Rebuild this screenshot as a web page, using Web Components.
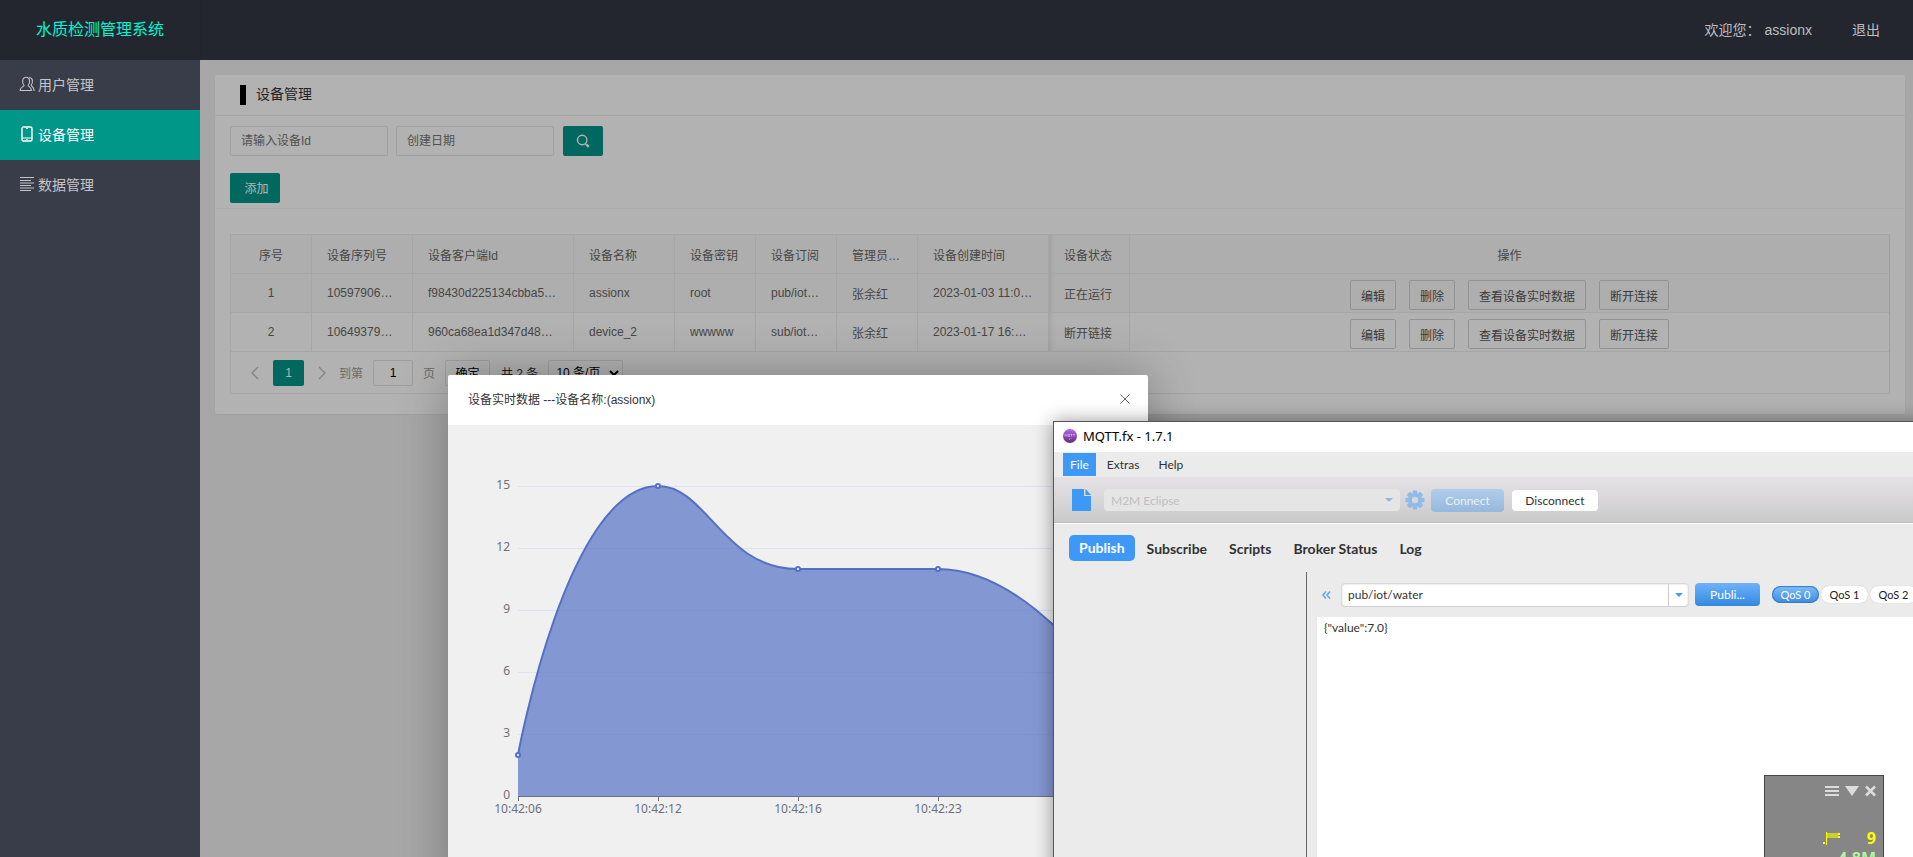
<!DOCTYPE html>
<html lang="zh-CN">
<head>
<meta charset="utf-8">
<title>水质检测管理系统</title>
<style>
  html, body { margin: 0; height: 100%; overflow: hidden; }
  body { font-family: "Liberation Sans", "Noto Sans CJK SC", sans-serif; font-size: 14px; color: #333; background: #f0f0f0; }
</style>
</head>
<body>
<admin-app></admin-app>
<script>
function define(name, html, setup) {
  const t = document.createElement('template');
  t.innerHTML = html;
  customElements.define(name, class extends HTMLElement {
    constructor() {
      super();
      this.attachShadow({ mode: 'open' }).append(t.content.cloneNode(true));
    }
    connectedCallback() { if (setup) setup(this, this.shadowRoot); }
  });
}

define('top-header', `
<style>
  :host { display: flex; height: 60px; background: #23262e; align-items: center; justify-content: space-between; }
  .logo { width: 200px; text-align: center; font-size: 16px; color: #00f5d4; line-height: 60px; box-shadow: 0 1px 2px rgba(0,0,0,.15); }
  nav { display: flex; gap: 40px; padding-right: 33px; color: #bdbec0; line-height: 60px; }
  a { color: inherit; text-decoration: none; }
  .who { display: flex; gap: 4px; }
</style>
<div class="logo">水质检测管理系统</div>
<nav><span class="who"><span>欢迎您：</span><span>assionx</span></span><a href="#logout">退出</a></nav>`);

define('side-item', `
<style>
  :host { display: block; }
  a { display: flex; align-items: center; gap: 3px; box-sizing: border-box; height: 50px; padding: 0 0 2px 19px; color: #c4c5c8; text-decoration: none; }
  :host([active]) a { background: #009688; color: #fff; }
</style>
<a href="#"><slot name="icon"></slot><slot></slot></a>`);

define('side-menu', `
<style>
  :host { display: block; width: 200px; flex: none; background: #393d49; }
  svg { width: 16px; height: 16px; fill: none; stroke: currentColor; stroke-width: 1.1; display: block; }
</style>
<side-item><svg slot="icon" viewBox="0 0 16 16"><path d="M5 9.400C3.700 8.300 3.400 6.200 3.700 4.400c.3-2 1.700-3.200 3.400-3.200s3.100 1.200 3.400 3.200c.3 1.800 0 3.900-1.300 5 0 1.400 3.100 1.200 3.300 5.100H1.100c.2-3.900 3.900-3.700 3.900-5.100zM10 1.800c2.200-.3 3.200.9 3.400 2.800.2 1.800-.1 3.400-1.200 4.600 0 1.400 2.700 1.500 2.900 5.100h-1"/></svg>用户管理</side-item>
<side-item active><svg slot="icon" viewBox="0 0 16 16"><rect x="3" y="1" width="10" height="14" rx="1.500" stroke-width="1.400"/><path d="M3 12h10M7 2.500h2M7.300 13.500h1.400"/></svg>设备管理</side-item>
<side-item><svg slot="icon" viewBox="0 0 16 16"><path d="M1 1.500h14M1 4.500h11M1 7h14M1 9.500h11M1 12h14M1 14.500h11"/></svg>数据管理</side-item>`);

define('search-bar', `
<style>
  :host { display: block; padding: 10px 15px 5px; border-bottom: 1px solid #f6f6f6; }
  form { display: flex; align-items: center; gap: 8px; }
  input { box-sizing: border-box; width: 158px; height: 30px; border: 1px solid #e6e6e6; border-radius: 2px; padding: 0 10px; font: inherit; font-size: 12px; background: #fff; }
  input::placeholder { color: #757575; opacity: 1; }
  button { height: 30px; border: 0; border-radius: 2px; background: #009688; color: #fff; font: inherit; font-size: 12px; padding: 0; }
  .go { width: 40px; display: grid; place-items: center; margin-left: 1px; }
  .add { width: 50px; margin-top: 17px; padding: 0 0 2px 3px; }
  svg { width: 14px; height: 14px; fill: none; stroke: #fff; stroke-width: 1.400; }
</style>
<form><input aria-label="设备Id" placeholder="请输入设备Id"><input aria-label="创建日期" placeholder="创建日期">
<button class="go" type="button" aria-label="搜索"><svg viewBox="0 0 14 14"><circle cx="6.200" cy="6" r="4.700"/><path d="M9.400 9.800l1 1" /><path d="M10.500 10.500l2.300 2.300" stroke-width="2.400"/></svg></button></form>
<button class="add" type="button">添加</button>`);

const rows = [
  ['1', '10597906…', 'f98430d225134cbba5…', 'assionx', 'root', 'pub/iot…', '张余红', '2023-01-03 11:0…', '正在运行'],
  ['2', '10649379…', '960ca68ea1d347d48…', 'device_2', 'wwwww', 'sub/iot…', '张余红', '2023-01-17 16:…', '断开链接']
];
const heads = ['序号', '设备序列号', '设备客户端Id', '设备名称', '设备密钥', '设备订阅', '管理员…', '设备创建时间', '设备状态', '操作'];
define('device-table', `
<style>
  :host { display: block; border: 1px solid #eee; border-right-color: #e6e6e6; font-size: 12px; color: #666; }
  table { border-collapse: separate; border-spacing: 0; table-layout: fixed; width: 100%; }
  th, td { box-sizing: border-box; height: 39px; padding: 0 0 0 15px; border-right: 1px solid #eee; border-bottom: 1px solid #eee; font-weight: 400; text-align: left; white-space: nowrap; overflow: hidden; }
  th { background: #fafafa; }
  tbody tr:first-child td { background: #fafafa; }
  th:first-child, td:first-child, th:last-child, td:last-child { text-align: center; padding: 0; }
  th:last-child, td:last-child { border-right: 0; }
  th:nth-child(9), td:nth-child(9) { box-shadow: inset 5px 0 6px -4px rgba(0,0,0,.12); }
  .ops { display: flex; justify-content: center; gap: 13px; padding-top: 4px; }
  .ops button { box-sizing: border-box; height: 30px; padding: 0 10px; border: 1px solid #d2d2d2; border-radius: 2px; background: none; color: #555; font: inherit; }
</style>
<table><colgroup><col style="width:81px"><col style="width:101px"><col style="width:161px"><col style="width:101px"><col style="width:81px"><col style="width:81px"><col style="width:81px"><col style="width:131px"><col style="width:81px"><col></colgroup>
<thead><tr></tr></thead><tbody></tbody></table>
<slot></slot>`, (host, root) => {
  root.querySelector('thead tr').innerHTML = heads.map(h => `<th scope="col">${h}</th>`).join('');
  root.querySelector('tbody').innerHTML = rows.map(r => `<tr>${r.map(c => `<td>${c}</td>`).join('')}<td><div class="ops"><button>编辑</button><button>删除</button><button>查看设备实时数据</button><button>断开连接</button></div></td></tr>`).join('');
});

define('page-bar', `
<style>
  :host { display: flex; align-items: center; height: 41px; padding-left: 20px; font-size: 12px; color: #999; }
  svg { width: 8px; height: 14px; fill: none; stroke: #bbb; stroke-width: 1.300; }
  .cur, input, button, select { box-sizing: border-box; height: 26px; border: 1px solid #e2e2e2; border-radius: 2px; font: inherit; background: #fff; color: #000; }
  .cur { width: 31px; margin: 0 14px; background: #009688; border: 0; color: #fff; line-height: 26px; text-align: center; text-decoration: none; }
  input { width: 40px; margin: 0 10px; text-align: center; padding: 0; }
  button { width: 45px; padding: 0; margin: 0 11px 0 10px; }
  .n { color: #333; }
  select { width: 75px; margin-left: 10px; padding: 0 0 0 3px; }
  .t { margin-left: 13px; }
</style>
<svg viewBox="0 0 8 14"><path d="M7 1L1 7l6 6"/></svg><a class="cur" href="#1">1</a><svg viewBox="0 0 8 14"><path d="M1 1l6 6-6 6"/></svg>
<span class="t">到第</span><input aria-label="页码" value="1"><span>页</span><button>确定</button><span class="n">共 2 条</span><select aria-label="每页条数"><option>10 条/页</option></select>`);

define('device-panel', `
<style>
  :host { display: block; background: #fff; border-radius: 2px; padding-bottom: 20px; box-shadow: 0 1px 2px rgba(0,0,0,.05); }
  h1 { margin: 0; height: 40px; border-bottom: 1px solid #f0f0f0; display: flex; align-items: center; gap: 10px; padding-left: 25px; font-size: 14px; line-height: 20px; font-weight: 400; color: #333; }
  h1 span { padding-bottom: 2px; }
  h1::before { content: ""; width: 6px; height: 20px; background: #000; }
  .list { padding: 25px 15px 0; }
</style>
<h1><span>设备管理</span></h1><search-bar></search-bar><div class="list"><device-table><page-bar></page-bar></device-table></div>`);

define('level-chart', `
<style>
  :host { display: block; background: #f0f0f0; height: 480px; }
  svg { display: block; width: 700px; height: 480px; }
  text { font: 12px "Noto Sans", sans-serif; fill: #6e7079; }
  .y { text-anchor: end; } .x { text-anchor: middle; }
  .grid { stroke: #dbe4f5; }
  .axis { stroke: #6e7079; }
  .area { fill: #5470c6; fill-opacity: .7; }
  .line { fill: none; stroke: #5470c6; stroke-width: 2; }
  circle { fill: #fff; stroke: #5470c6; stroke-width: 2; }
</style>
<svg viewBox="0 0 700 480" role="img" aria-label="设备实时数据">
  <g class="grid"></g>
  <path class="area" d="M70 330C70 330 119 61 210 61C259 61 275 144 350 144C415 144 425 144 490 144C565 144 630 226 630 226V371H70Z"/>
  <path class="axis" d="M70 371.500H630M70.500 371v5M210.500 371v5M350.500 371v5M490.500 371v5M630.500 371v5"/>
  <path class="line" d="M70 330C70 330 119 61 210 61C259 61 275 144 350 144C415 144 425 144 490 144C565 144 630 226 630 226"/>
  <circle cx="70" cy="330" r="2"/><circle cx="210" cy="61" r="2"/><circle cx="350" cy="144" r="2"/><circle cx="490" cy="144" r="2"/><circle cx="630" cy="226" r="2"/>
  <g class="labels"></g>
</svg>`, (host, root) => {
  const values = [15, 12, 9, 6, 3, 0], times = ['10:42:06', '10:42:12', '10:42:16', '10:42:23'];
  root.querySelector('.grid').innerHTML = values.slice(0, 5).map((v, i) => `<path d="M70 ${61.5 + i * 62}H630"/>`).join('');
  root.querySelector('.labels').innerHTML =
    values.map((v, i) => `<text class="y" x="62" y="${64 + i * 62}">${v}</text>`).join('') +
    times.map((v, i) => `<text class="x" x="${70 + i * 140}" y="388">${v}</text>`).join('');
});

define('data-dialog', `
<style>
  :host { display: block; width: 700px; background: #fff; border-radius: 2px; box-shadow: 1px 1px 50px rgba(0,0,0,.3); }
  header { display: flex; align-items: center; justify-content: space-between; box-sizing: border-box; height: 50px; padding: 0 17px 3px 20px; font-size: 12px; color: #333; }
  button { border: 0; background: none; padding: 0; width: 12px; height: 12px; display: grid; }
  svg { width: 12px; height: 12px; stroke: #666; fill: none; stroke-width: 1; }
</style>
<header><span>设备实时数据 ---设备名称:(assionx)</span><button aria-label="关闭"><svg viewBox="0 0 12 12"><path d="M1.500 1.500l9 9M10.500 1.500l-9 9"/></svg></button></header>
<level-chart></level-chart>`);

define('mqtt-toolbar', `
<style>
  :host { display: flex; align-items: center; height: 46px; padding-left: 18px; background: linear-gradient(#e5e2e6, #cacaca); border-bottom: 1px solid #fff; box-shadow: inset 0 -1px #bbb; }
  .doc { width: 20px; height: 24px; margin-right: 12px; }
  .gear { width: 20px; height: 20px; margin: 0 6px 0 5px; }
  .pick { display: flex; align-items: center; position: relative; width: 296px; }
  select { appearance: none; width: 100%; height: 22px; border: 0; border-radius: 4px; padding: 0 7px; background: #e5e5e5; color: #bfbfbf; opacity: 1; font: inherit; }
  .pick::after { content: ""; position: absolute; right: 7px; border: 4px solid transparent; border-top-color: #8cb8e8; border-bottom: 0; }
  button { height: 23px; border: 0; border-radius: 4px; font: inherit; padding: 0; }
  .on { width: 73px; background: linear-gradient(#b0cdea, #96b8dc); color: #e9eff5; margin-right: 8px; }
  .off { width: 86px; height: 21px; background: #fff; color: #333; }
</style>
<svg class="doc" viewBox="0 0 20 24"><path fill="#3d98f8" d="M0 1h12v7h7v15H0z M13.500 1L19 7H13.500z"/></svg>
<div class="pick"><select disabled aria-label="连接配置"><option>M2M Eclipse</option></select></div>
<svg class="gear" viewBox="0 0 20 20"><g fill="#8fbae9"><rect x="7.700" y="0.500" width="4.600" height="19" rx="1"/><rect x="7.700" y="0.500" width="4.600" height="19" rx="1" transform="rotate(45 10 10)"/><rect x="7.700" y="0.500" width="4.600" height="19" rx="1" transform="rotate(90 10 10)"/><rect x="7.700" y="0.500" width="4.600" height="19" rx="1" transform="rotate(135 10 10)"/><circle cx="10" cy="10" r="7"/></g><circle cx="10" cy="10" r="3.200" fill="#d9d7da"/></svg>
<button class="on" disabled>Connect</button><button class="off">Disconnect</button>`);

define('mqtt-publish', `
<style>
  :host { display: block; flex: 1; min-width: 0; }
  .bar { display: flex; align-items: center; height: 45px; padding: 0 0 0 15px; box-sizing: border-box; }
  .fold { width: 10px; height: 10px; margin-right: 9px; fill: none; stroke: #5ba7f5; stroke-width: 1.500; flex: none; }
  .topic { display: flex; width: 348px; height: 23px; flex: none; background: #fff; border-radius: 4px; box-shadow: 0 1px #cfcfcf, inset 0 1px 2px #ccc; align-items: center; box-sizing: border-box; border: 1px solid #ddd; border-width: 0 1px; }
  input.t { flex: 1; min-width: 0; border: 0; background: none; padding: 0 6px; font: inherit; color: #333; }
  .drop { width: 20px; height: 22px; padding: 0; border: 0; border-left: 1px solid #ccc; background: none; display: grid; place-items: center; }
  .drop::before { content: ""; border: 4px solid transparent; border-top-color: #4b9cf0; border-bottom: 0; }
  .pub { width: 65px; height: 23px; flex: none; border: 0; border-radius: 4px; margin: 0 12px 0 6px; padding: 0; color: #fff; font: inherit; background: linear-gradient(#6db3fb, #3388e0); }
  .q { width: 47px; height: 17px; flex: none; margin-right: 2px; border: 0; padding: 0; border-radius: 9px; background: #fff; color: #222; font: inherit; font-size: 11px; line-height: 17px; box-shadow: 0 0 1px #bbb; }
  .q.on { background: linear-gradient(#80bdfb, #3a8ce2); color: #fff; box-shadow: inset 0 0 1px 1px #3579c2; }
  textarea { display: block; box-sizing: border-box; width: calc(100% - 10px); margin-left: 10px; height: 400px; border: 0; resize: none; padding: 3px 7px; font: inherit; line-height: 15px; color: #333; background: #fff; }
</style>
<div class="bar"><svg class="fold" viewBox="0 0 10 10"><path d="M4 1.500L1 5l3 3.500M8 1.500L5 5l3 3.500"/></svg>
<div class="topic"><input class="t" aria-label="Topic" value="pub/iot/water"><button class="drop" aria-label="Topics"></button></div>
<button class="pub">Publi...</button><button class="q on">QoS 0</button><button class="q">QoS 1</button><button class="q">QoS 2</button></div>
<textarea aria-label="Message">{"value":7.0}</textarea>`);

define('mqtt-window', `
<style>
  :host { display: block; box-sizing: border-box; border: 1px solid #555; background: #ebebeb; font-family: Lato, sans-serif; font-size: 12px; color: #333; box-shadow: 0 0 18px rgba(0,0,0,.4); }
  .title { display: flex; align-items: center; gap: 6px; box-sizing: border-box; height: 30px; padding: 0 0 2px 9px; background: #fff; color: #000; font-family: "Noto Sans", sans-serif; font-size: 13px; }
  .title svg { width: 14px; height: 14px; }
  .menu { display: flex; height: 25px; padding-left: 9px; align-items: center; }
  .menu a, .tabs a { color: inherit; text-decoration: none; }
  .menu a { line-height: 23px; margin-right: 11px; padding: 0 4px; }
  .menu a.on { background: #3d98f8; color: #fff; padding: 0 7px; margin-right: 7px; }
  .tabs { display: flex; align-items: center; height: 48px; padding-left: 15px; font-size: 14px; font-weight: 700; gap: 22px; }
  .tabs a.on { background: #3d98f8; color: #fff; border-radius: 5px; padding: 0 10px; line-height: 26px; margin-right: -10px; }
  .body { display: flex; }
  .tree { width: 252px; flex: none; border-right: 1px solid #666; }
</style>
<div class="title"><svg viewBox="0 0 14 14"><defs><linearGradient id="g" x2="0" y2="1"><stop offset="0" stop-color="#b96ae8"/><stop offset="1" stop-color="#5f2d7d"/></linearGradient></defs><circle cx="7" cy="7" r="7" fill="url(#g)"/><path d="M2 7.500v-2l1 1 1-1v2M5.200 5.500v2h1.400v-2zM7.600 5.500h1.600M8.400 5.500v2M10 5.500h1.800M10.900 5.500v2M6.500 9.500v1.300M7.500 9.500h.8" stroke="#fff" stroke-width=".6" opacity=".7" fill="none"/></svg><span>MQTT.fx - 1.7.1</span></div>
<nav class="menu"><a class="on" href="#file">File</a><a href="#extras">Extras</a><a href="#help">Help</a></nav>
<mqtt-toolbar></mqtt-toolbar>
<nav class="tabs"><a class="on" href="#publish">Publish</a><a href="#subscribe">Subscribe</a><a href="#scripts">Scripts</a><a href="#broker">Broker Status</a><a href="#log">Log</a></nav>
<div class="body"><div class="tree"></div><mqtt-publish></mqtt-publish></div>`);

define('monitor-widget', `
<style>
  :host { display: block; box-sizing: border-box; width: 120px; height: 160px; background: #868686; border: 1px solid #444; font: bold 16px/20px "Noto Sans", sans-serif; padding: 7px 7px 0 0; text-align: right; }
  .ctl { display: flex; gap: 6px; justify-content: flex-end; align-items: center; height: 16px; }
  button { border: 0; padding: 0; background: none; display: grid; }
  svg { display: block; height: 14px; }
  .row { display: flex; justify-content: flex-end; align-items: center; color: #ff0; gap: 26px; margin-top: 29px; height: 20px; }
  .mem { color: #aef79a; margin: 0; }
</style>
<div class="ctl"><button aria-label="menu"><svg width="14" viewBox="0 0 14 14"><path d="M0 3h14M0 7h14M0 11h14" stroke="#ddd" stroke-width="2"/></svg></button><button aria-label="collapse"><svg width="14" viewBox="0 0 14 14"><path d="M0 2h14L7 12z" fill="#ddd"/></svg></button><button aria-label="close"><svg width="11" viewBox="0 0 11 14"><path d="M1 2.500l9 9M10 2.500l-9 9" stroke="#ddd" stroke-width="2.500"/></svg></button></div>
<div class="row"><svg width="18" viewBox="0 0 18 14"><path d="M0 11h2v2H0zM3 1h1v13H3z M15 2h2v2h-2zM15 5h2v2h-2z" fill="#ff0"/><path d="M4 2h11v5H4z" fill="#cc3"/></svg><span>9</span></div>
<p class="mem">4.8M</p>`);

define('admin-app', `
<style>
  :host { display: flex; flex-direction: column; height: 100vh; position: relative; overflow: hidden; }
  .row { display: flex; flex: 1; min-height: 0; }
  main { flex: 1; min-width: 0; position: relative; padding: 15px 8px 0 15px; background: #f0f0f0; overflow: hidden; }
  main::after { content: ""; position: absolute; inset: 0; background: rgba(0,0,0,.3); }
  data-dialog { position: absolute; left: 448px; top: 375px; }
  mqtt-window { position: absolute; left: 1053px; top: 421px; right: -60px; bottom: -60px; overflow: clip; }
  monitor-widget { position: absolute; right: 29px; bottom: -78px; }
</style>
<top-header></top-header>
<div class="row"><side-menu></side-menu><main><device-panel></device-panel></main></div>
<data-dialog></data-dialog>
<mqtt-window></mqtt-window>
<monitor-widget></monitor-widget>`);
</script>
</body>
</html>
